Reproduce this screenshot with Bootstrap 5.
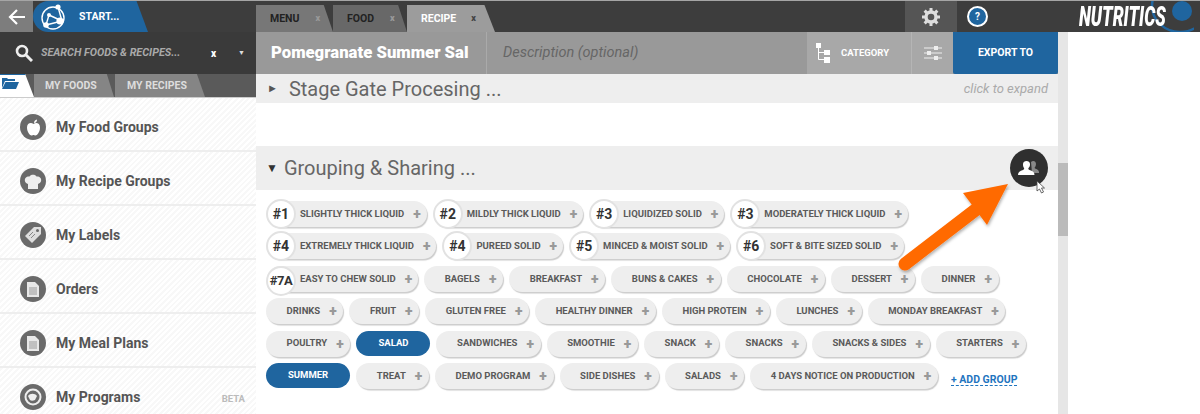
<!DOCTYPE html>
<html lang="en"><head><meta charset="utf-8"><title>Nutritics</title>
<link href="https://cdn.jsdelivr.net/npm/bootstrap@5.3.0/dist/css/bootstrap.min.css" rel="stylesheet">
<style>
html,body{height:414px;overflow:hidden;background:#fff}
body{font-family:Roboto,"Liberation Sans",sans-serif;color:#555}
.shell{width:1200px;height:414px;position:relative;overflow:hidden}
.topbar{height:32px;background:#3d3d3d;border-top:1px solid #a5a5a5}
.backbox{width:33px;background:#7d7d7d}
.startbtn{width:115px;background:#1f659f;clip-path:polygon(0 0,90% 0,100% 100%,0 100%);border-radius:16px 0 0 16px;color:#fff;font-weight:700;font-size:10.5px;padding-left:7px;gap:13px}
.tabzone{margin-left:108px;padding-top:4px}
.doctab{height:27px;color:#222;font-weight:700;font-size:10.5px;padding-left:14px;clip-path:polygon(0 0,88% 0,100% 100%,0 100%)}
.doctab span{font-size:9px;color:#999;font-weight:900}
.tab-a{width:77px;background:#777;gap:16px}
.tab-b{width:74px;background:#686868;gap:16px}
.tab-c{width:88px;background:#9c9c9c;color:#fff;gap:15px}
.tab-c span{color:#444}
.gearbox{width:52px;margin-left:410px;background:#555}
.helpdot{width:21px;height:21px;border-radius:50%;border:2px solid #fff;background:#1f659f;color:#fff;font-size:10px;font-weight:700;margin-left:10px}
.brandbox{width:122px;margin-left:auto;position:relative;overflow:hidden}
.brandring{position:absolute;left:56px;top:-30px}
.brandtxt{position:relative;color:#fff;font-weight:900;font-style:italic;font-size:28px;transform:scaleX(.62);transform-origin:0 50%;margin-left:1px;line-height:1;white-space:nowrap}
.leftcol{width:256px;background:repeating-linear-gradient(135deg,#fff 0 2px,#f8f8f8 2px 4px)}
.searchbar{height:42px;background:#3a3a3a;color:#bbb;padding-left:15px}
.searchtxt{font-style:italic;font-weight:700;font-size:10.8px;margin-left:8px;width:170px;color:#aaa;white-space:nowrap}
.searchx{color:#fff;font-size:10px;font-weight:900;width:27px}
.searchv{color:#ddd;font-size:7px}
.sidetabs{height:24px;background:#5a5a5a;border-bottom:1px solid #ccc}
.foldertab{width:34px;background:#fff;border-top:1px solid #1f659f;clip-path:polygon(0 0,74% 0,100% 100%,0 100%);padding:2px 0 0 2px;line-height:0}
.sidetab{background:#858585;color:#ddd;font-weight:700;font-size:10.5px;height:23px;clip-path:polygon(0 0,91% 0,100% 100%,0 100%)}
.st-a{width:80px;padding-left:11px}
.st-b{width:90px;padding-left:12px;margin-left:1px}
.siderow{height:54px;border-bottom:2px solid #eee;padding:6px 0 0 20px;font-weight:700;font-size:14px;color:#555;flex:none}
.sidedot{width:26px;height:26px;border-radius:50%;background:#6a6a6a;margin-right:10px;flex:none}
.betatag{margin-left:auto;margin-right:11px;color:#bbb;font-size:9.5px;padding-top:5px}
.maincol{width:802px}
.headbar{height:42px;background:#999}
.recipe-name{width:231px;padding-left:15px;color:#fff;font-weight:900;font-size:16.7px;border-right:1px solid #aaa;white-space:nowrap}
.recipe-desc{width:320px;padding-left:16px;font-style:italic;font-size:14.5px;color:#666}
.catbtn{width:104px;background:#a8a8a8;color:#fff;font-size:9.5px;font-weight:700;padding-left:9px;gap:11px}
.filterbtn{width:42px;background:#a8a8a8;border-left:1px solid #b5b5b5}
.exportbtn{width:105px;background:#1f659f;color:#fff;font-weight:700;font-size:10.5px;border-radius:0 0 2px 2px}
.sechead{background:#eee;color:#666;font-size:20px;line-height:1}
.sec-a{height:29px;padding:0 10px 0 11px}
.sec-b{height:44px;margin-top:43px;padding:0 10px 0 10px}
.tri{font-size:11px;color:#555;margin-right:11px}
.sec-b .tri{font-size:12px;margin-right:6px;color:#333}
.hinttxt{margin-left:auto;font-style:italic;font-size:13px;color:#aaa}
.chipwrap{padding:11px 18px 0 10px;row-gap:6.4px;column-gap:6px}
.gchip{height:26px;border-radius:13px;background:#eee;box-shadow:1px 1.5px 1px #ccc;color:#5a5a5a;font-weight:700;font-size:9.5px;padding:0 6.7px 0 20.6px;white-space:nowrap}
.gplus{font-style:normal;font-size:14px;color:#999;margin-left:9px;font-weight:900;line-height:1}
.has-num{padding-left:0;padding-right:6px;margin-left:1px}
.gnum{width:30px;height:30px;flex:none;margin:-2px 4px -2px -1px;border-radius:50%;background:#fff;border:2px solid #e2e2e2;color:#333;font-size:14px;font-weight:700}
.has-wide .gnum{font-size:13px;letter-spacing:-.4px;margin:2px 4px -2px -1px}
.gchip-on{background:#1f659f;color:#fff;box-shadow:none;padding:0 22px;height:25px}
.addlink{color:#1f75bf;font-weight:700;font-size:10.5px;border-bottom:1px dashed #1f75bf;line-height:1.05;text-decoration:none;margin:8px 0 0 7px;align-self:center}
.vscroll{width:10px;background:#e6e6e6;padding-top:131px}
.vthumb{height:73px;background:#bbb}
.sharebtn{position:absolute;left:1010px;top:149px;width:38px;height:38px;border-radius:50%;background:#2f2f2f}
.overart{position:absolute;left:0;top:0;pointer-events:none}
</style></head><body>
<div class="shell d-flex flex-column">
 <div class="topbar d-flex flex-none">
  <div class="backbox d-flex align-items-center justify-content-center">
   <svg width="18" height="16" viewBox="0 0 18 16"><path d="M9 1 2 8l7 7M2 8h15" fill="none" stroke="#fff" stroke-width="2.2"/></svg>
  </div>
  <div class="startbtn d-flex align-items-center">
   <svg width="26" height="28" viewBox="0 0 26 28"><circle cx="13" cy="15" r="11" fill="none" stroke="#fff" stroke-width="1.4"/><path d="M18 4 22 18 6 22M9 12l13 6M9 12 6 22" fill="none" stroke="#fff" stroke-width="1.4"/><circle cx="18" cy="4" r="2.6" fill="#fff"/><circle cx="20" cy="18" r="3.6" fill="#fff"/><circle cx="6" cy="22" r="2.8" fill="#fff"/><circle cx="9" cy="12" r="2" fill="#fff"/></svg>
   <span>START...</span>
  </div>
  <div class="tabzone d-flex">
   <div class="doctab tab-a d-flex align-items-center">MENU<span>x</span></div>
   <div class="doctab tab-b d-flex align-items-center">FOOD<span>x</span></div>
   <div class="doctab tab-c d-flex align-items-center">RECIPE<span>x</span></div>
  </div>
  <div class="gearbox d-flex align-items-center justify-content-center">
   <svg width="18" height="18" viewBox="0 0 18 18"><circle cx="9" cy="9" r="5" fill="none" stroke="#ddd" stroke-width="3.4"/><path d="M9 0v4M9 14v4M0 9h4M14 9h4M2.600 2.600l2.800 2.800M12.600 12.600l2.800 2.800M2.600 15.400l2.800-2.800M12.600 5.400l2.800-2.800" stroke="#ddd" stroke-width="3"/></svg>
  </div>
  <div class="helpdot align-self-center d-flex align-items-center justify-content-center">?</div>
  <div class="brandbox d-flex align-items-center">
   <svg class="brandring" width="60" height="70" viewBox="0 0 60 70"><ellipse cx="46" cy="35" rx="28" ry="26" fill="none" stroke="#1f659f" stroke-width="2.500"/><circle cx="48" cy="40" r="10" fill="#1f659f"/></svg>
   <span class="brandtxt">NUTRITICS</span>
  </div>
 </div>
 <div class="d-flex flex-grow-1">
  <div class="leftcol d-flex flex-column flex-none">
   <div class="searchbar d-flex align-items-center">
    <svg width="18" height="18" viewBox="0 0 18 18"><circle cx="7" cy="7" r="5" fill="none" stroke="#eee" stroke-width="2.600"/><path d="M11 11l6 6" stroke="#eee" stroke-width="3"/></svg>
    <span class="searchtxt">SEARCH FOODS &amp; RECIPES...</span>
    <span class="searchx">x</span><span class="searchv">▼</span>
   </div>
   <div class="sidetabs d-flex">
    <div class="foldertab"><svg width="17" height="12" viewBox="0 0 17 12"><path d="M0 1h5l1 1h7v2H3L0 11z" fill="#1f659f"/><path d="M3.500 5H17l-3 7H0z" fill="#1f659f"/></svg></div>
    <div class="sidetab st-a d-flex align-items-center">MY FOODS</div>
    <div class="sidetab st-b d-flex align-items-center">MY RECIPES</div>
   </div>
   <div class="siderow d-flex align-items-center"><span class="sidedot d-flex align-items-center justify-content-center"><svg width="15" height="17" viewBox="0 0 15 17"><path d="M7.500 5C5 3 1 4 1 8.500 1 13 4 16.500 5.500 16.500c1 0 1.200-.5 2-.5s1 .5 2 .5c1.500 0 4.500-3.500 4.500-8C14 4 10 3 7.500 5z" fill="#fff"/><path d="M8 4c0-2 1-3 3-3.500C11 2.500 10 4 8 4z" fill="#fff"/></svg></span>My Food Groups</div>
   <div class="siderow d-flex align-items-center"><span class="sidedot d-flex align-items-center justify-content-center"><svg width="18" height="17" viewBox="0 0 18 17"><path d="M4 11C1 10 0 7 1.500 5 3 3 5 3.500 5.500 3.500 6.500 1 11.500 1 12.500 3.500c.5 0 2.500-.5 4 1.500S17 10 14 11v5H4z" fill="#eee"/></svg></span>My Recipe Groups</div>
   <div class="siderow d-flex align-items-center"><span class="sidedot d-flex align-items-center justify-content-center"><svg width="18" height="18" viewBox="0 0 18 18"><path d="M17 1v7L8 17 1 10 10 1z" fill="#ddd"/><circle cx="13.500" cy="4.500" r="1.500" fill="#6a6a6a"/><path d="M5 10l4-4M7 12l4-4" stroke="#888"/></svg></span>My Labels</div>
   <div class="siderow d-flex align-items-center"><span class="sidedot d-flex align-items-center justify-content-center"><svg width="12" height="15" viewBox="0 0 12 15"><path d="M0 0h8l4 4v11H0z" fill="#e8e8e8"/><path d="M2 6h8M2 8h8M2 10h8M2 12h8" stroke="#999"/></svg></span>Orders</div>
   <div class="siderow d-flex align-items-center"><span class="sidedot d-flex align-items-center justify-content-center"><svg width="12" height="15" viewBox="0 0 12 15"><path d="M0 0h8l4 4v11H0z" fill="#e8e8e8"/><path d="M2 6h8M2 8h8M2 10h8M2 12h8" stroke="#999"/></svg></span>My Meal Plans</div>
   <div class="siderow d-flex align-items-center"><span class="sidedot d-flex align-items-center justify-content-center"><svg width="20" height="20" viewBox="0 0 20 20"><circle cx="10" cy="10" r="7.500" fill="none" stroke="#eee" stroke-width="2"/><path d="M5 9c2-3 7-3 9 0l-2 4c-2 1-4 1-5 0z" fill="#eee"/></svg></span>My Programs<span class="betatag">BETA</span></div>
  </div>
  <div class="maincol d-flex flex-column flex-none">
   <div class="headbar d-flex align-items-stretch flex-none">
    <div class="recipe-name d-flex align-items-center">Pomegranate Summer Sal</div>
    <div class="recipe-desc d-flex align-items-center">Description (optional)</div>
    <div class="catbtn d-flex align-items-center">
     <svg width="14" height="20" viewBox="0 0 14 20"><rect x="0" y="0" width="5" height="5" fill="#fff"/><rect x="8" y="7" width="6" height="5" fill="#fff"/><rect x="8" y="14" width="6" height="6" fill="#fff"/><path d="M2.500 5v11.500H8M2.500 9.500H8" fill="none" stroke="#fff"/></svg>
     <span>CATEGORY</span>
    </div>
    <div class="filterbtn d-flex align-items-center justify-content-center">
     <svg width="18" height="14" viewBox="0 0 18 14"><path d="M0 2h18M0 7h18M0 12h18" stroke="#eee"/><rect x="10" y="0" width="4" height="4" fill="#eee"/><rect x="3" y="5" width="4" height="4" fill="#eee"/><rect x="10" y="10" width="4" height="4" fill="#eee"/></svg>
    </div>
    <div class="exportbtn d-flex align-items-center justify-content-center">EXPORT TO</div>
   </div>
   <div class="sechead sec-a d-flex align-items-center flex-none"><span class="tri">►</span>Stage Gate Procesing ...<span class="hinttxt">click to expand</span></div>
   <div class="sechead sec-b d-flex align-items-center flex-none"><span class="tri">▼</span>Grouping &amp; Sharing ...</div>
   <div class="chipwrap d-flex flex-wrap align-items-start">
    <span class="gchip has-num d-flex align-items-center"><b class="gnum d-flex align-items-center justify-content-center">#1</b>SLIGHTLY THICK LIQUID<i class="gplus">+</i></span>
    <span class="gchip has-num d-flex align-items-center"><b class="gnum d-flex align-items-center justify-content-center">#2</b>MILDLY THICK LIQUID<i class="gplus">+</i></span>
    <span class="gchip has-num d-flex align-items-center"><b class="gnum d-flex align-items-center justify-content-center">#3</b>LIQUIDIZED SOLID<i class="gplus">+</i></span>
    <span class="gchip has-num d-flex align-items-center"><b class="gnum d-flex align-items-center justify-content-center">#3</b>MODERATELY THICK LIQUID<i class="gplus">+</i></span>
    <span class="gchip has-num d-flex align-items-center"><b class="gnum d-flex align-items-center justify-content-center">#4</b>EXTREMELY THICK LIQUID<i class="gplus">+</i></span>
    <span class="gchip has-num d-flex align-items-center"><b class="gnum d-flex align-items-center justify-content-center">#4</b>PUREED SOLID<i class="gplus">+</i></span>
    <span class="gchip has-num d-flex align-items-center"><b class="gnum d-flex align-items-center justify-content-center">#5</b>MINCED &amp; MOIST SOLID<i class="gplus">+</i></span>
    <span class="gchip has-num d-flex align-items-center"><b class="gnum d-flex align-items-center justify-content-center">#6</b>SOFT &amp; BITE SIZED SOLID<i class="gplus">+</i></span>
    <span class="gchip has-num has-wide d-flex align-items-center"><b class="gnum d-flex align-items-center justify-content-center">#7A</b>EASY TO CHEW SOLID<i class="gplus">+</i></span>
    <span class="gchip d-flex align-items-center">BAGELS<i class="gplus">+</i></span>
    <span class="gchip d-flex align-items-center">BREAKFAST<i class="gplus">+</i></span>
    <span class="gchip d-flex align-items-center">BUNS &amp; CAKES<i class="gplus">+</i></span>
    <span class="gchip d-flex align-items-center">CHOCOLATE<i class="gplus">+</i></span>
    <span class="gchip d-flex align-items-center">DESSERT<i class="gplus">+</i></span>
    <span class="gchip d-flex align-items-center">DINNER<i class="gplus">+</i></span>
    <span class="gchip d-flex align-items-center">DRINKS<i class="gplus">+</i></span>
    <span class="gchip d-flex align-items-center">FRUIT<i class="gplus">+</i></span>
    <span class="gchip d-flex align-items-center">GLUTEN FREE<i class="gplus">+</i></span>
    <span class="gchip d-flex align-items-center">HEALTHY DINNER<i class="gplus">+</i></span>
    <span class="gchip d-flex align-items-center">HIGH PROTEIN<i class="gplus">+</i></span>
    <span class="gchip d-flex align-items-center">LUNCHES<i class="gplus">+</i></span>
    <span class="gchip d-flex align-items-center">MONDAY BREAKFAST<i class="gplus">+</i></span>
    <span class="gchip d-flex align-items-center">POULTRY<i class="gplus">+</i></span>
    <span class="gchip gchip-on d-flex align-items-center">SALAD</span>
    <span class="gchip d-flex align-items-center">SANDWICHES<i class="gplus">+</i></span>
    <span class="gchip d-flex align-items-center">SMOOTHIE<i class="gplus">+</i></span>
    <span class="gchip d-flex align-items-center">SNACK<i class="gplus">+</i></span>
    <span class="gchip d-flex align-items-center">SNACKS<i class="gplus">+</i></span>
    <span class="gchip d-flex align-items-center">SNACKS &amp; SIDES<i class="gplus">+</i></span>
    <span class="gchip d-flex align-items-center">STARTERS<i class="gplus">+</i></span>
    <span class="gchip gchip-on d-flex align-items-center">SUMMER</span>
    <span class="gchip d-flex align-items-center">TREAT<i class="gplus">+</i></span>
    <span class="gchip d-flex align-items-center">DEMO PROGRAM<i class="gplus">+</i></span>
    <span class="gchip d-flex align-items-center">SIDE DISHES<i class="gplus">+</i></span>
    <span class="gchip d-flex align-items-center">SALADS<i class="gplus">+</i></span>
    <span class="gchip d-flex align-items-center">4 DAYS NOTICE ON PRODUCTION<i class="gplus">+</i></span>
    <a class="addlink" href="#">+ ADD GROUP</a>
   </div>
  </div>
  <div class="vscroll flex-none"><div class="vthumb"></div></div>
 </div>
 <div class="sharebtn d-flex align-items-center justify-content-center">
  <svg width="22" height="16" viewBox="0 0 22 16"><path d="M13 2c2-2 5-1 5 2 0 2-1 3-1.500 4 1 1 4 1 4.500 4v1h-7z" fill="#888"/><path d="M0 15c0-3 2-4 5-5 1-.5 1.500-1 1-2C5 7 5 5 5 4c0-4 7-4 7 0 0 1 0 3-1.500 4-.5 1 0 1.500 1 2 3 1 5 2 5 5z" fill="#fff"/></svg>
 </div>
 <svg class="overart" width="1200" height="414" viewBox="0 0 1200 414">
  <defs><filter id="softdrop" x="-20%" y="-20%" width="140%" height="140%"><feDropShadow dx="1" dy="2" stdDeviation="1.500" flood-color="#000" flood-opacity=".3"/></filter></defs>
  <g filter="url(#softdrop)" fill="#ff6a00">
   <path d="M905 264 978 208" stroke="#ff6a00" stroke-width="13" stroke-linecap="round"/>
   <path d="M1008 184 963 193 987 225z"/>
  </g>
  <path d="M1037 181v10l2.500-2 2 4 2-1-2-4h3z" fill="#fff" stroke="#444" stroke-width=".8"/>
 </svg>
</div>
</body></html>
